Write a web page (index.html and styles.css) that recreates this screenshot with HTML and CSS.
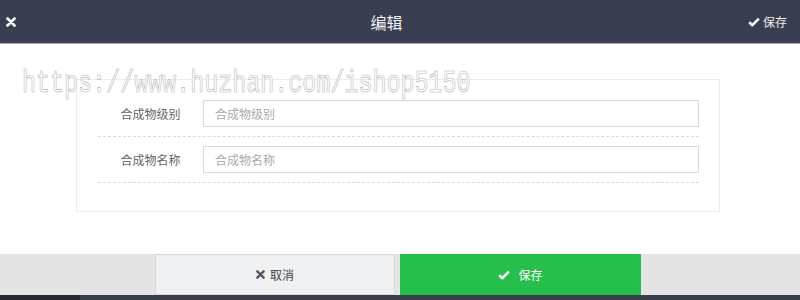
FILE: index.html
```html
<!DOCTYPE html>
<html lang="zh">
<head>
<meta charset="utf-8">
<link rel="stylesheet" href="styles.css">
</head>
<body>
<div class="page">
  <header class="topbar">
    <div class="tb-left">
      <svg class="ic-x" viewBox="0 0 10 10" width="10" height="10"><path d="M1.5 1.5 L8.5 8.5 M8.5 1.5 L1.5 8.5" stroke="#fff" stroke-width="2.6" stroke-linecap="round"/></svg>
    </div>
    <div class="tb-title">编辑</div>
    <div class="tb-right">
      <svg class="ic-check" viewBox="0 0 12 10" width="12" height="10"><path d="M1.2 5.2 L4.4 8.2 L10.8 1.6" fill="none" stroke="#fff" stroke-width="2.6" stroke-linejoin="round"/></svg>
      <span>保存</span>
    </div>
  </header>
  <main class="content">
    <div class="card">
      <div class="row">
        <label class="lbl">合成物级别</label>
        <div class="field"><input class="inp" type="text" placeholder="合成物级别"></div>
      </div>
      <div class="row">
        <label class="lbl">合成物名称</label>
        <div class="field"><input class="inp" type="text" placeholder="合成物名称"></div>
      </div>
    </div>
    <div class="watermark">https://www.huzhan.com/ishop5150</div>
  </main>
  <footer class="footer">
    <div class="btn btn-cancel">
      <svg viewBox="0 0 10 10" width="9" height="9"><path d="M1.5 1.5 L8.5 8.5 M8.5 1.5 L1.5 8.5" stroke="#555" stroke-width="2.6" stroke-linecap="round"/></svg>
      <span>取消</span>
    </div>
    <div class="btn btn-save">
      <svg viewBox="0 0 12 10" width="12" height="10"><path d="M1.2 5.2 L4.4 8.2 L10.8 1.6" fill="none" stroke="#fff" stroke-width="2.6" stroke-linejoin="round"/></svg>
      <span>保存</span>
    </div>
  </footer>
  <div class="under">
    <div class="under-left"></div>
  </div>
</div>
</body>
</html>
```
FILE: styles.css
```css
* { box-sizing: border-box; }
html, body { margin: 0; padding: 0; }
body {
  width: 800px;
  height: 300px;
  overflow: hidden;
  background: #fff;
  font-family: "Noto Sans CJK SC", "Noto Sans", sans-serif;
}
.page {
  display: flex;
  flex-direction: column;
  height: 300px;
}
.topbar {
  height: 44px;
  flex: none;
  background: #3a3e51;
  border-bottom: 1px solid #a9acb4;
  display: flex;
  align-items: center;
  color: #fff;
}
.tb-left {
  width: 25px;
  padding-left: 6px;
  display: flex;
  align-items: center;
}
.tb-title {
  flex: 1;
  text-align: center;
  font-size: 16px;
  color: #f2f2f4;
  line-height: 20px;
}
.tb-right {
  width: 52px;
  display: flex;
  align-items: center;
  gap: 3px;
  font-size: 12px;
  color: #eee;
}
.content {
  position: relative;
  flex: 1;
  padding-top: 35px;
}
.card {
  margin-left: 76px;
  width: 644px;
  border: 1px solid #ececec;
  padding: 20px 20px 28px 21px;
  display: flex;
  flex-direction: column;
  gap: 9px;
}
.row {
  display: flex;
  align-items: center;
  padding-bottom: 9px;
  border-bottom: 1px dashed #dcdcdc;
}
.lbl {
  width: 105px;
  text-align: center;
  font-size: 12px;
  color: #666;
}
.field { flex: 1; }
.inp {
  display: block;
  width: 100%;
  height: 27px;
  border: 1px solid #d9d9d9;
  padding: 0 11px;
  font-size: 12px;
  font-family: "Noto Sans CJK SC", sans-serif;
  outline: none;
  color: #555;
}
.inp::placeholder { color: #aaa; }
.watermark {
  position: absolute;
  left: 22px;
  top: 24px;
  font-family: "Liberation Mono", monospace;
  font-size: 32px;
  line-height: 32px;
  color: #fff;
  -webkit-text-stroke: 0.7px #b5b5b5;
  transform: scaleX(0.73);
  transform-origin: left top;
  pointer-events: none;
  white-space: nowrap;
}
.footer {
  height: 41px;
  flex: none;
  background: #e4e4e4;
  display: flex;
  padding-left: 155px;
  gap: 5px;
}
.btn {
  width: 241px;
  height: 41px;
  display: flex;
  align-items: center;
  justify-content: center;
  gap: 5px;
  font-size: 12px;
}
.btn-cancel {
  width: 240px;
  background: #eef0f1;
  border: 1px solid #d6d8da;
  color: #444;
}
.btn-save {
  background: #27bf4b;
  color: #fff;
  gap: 8px;
}
.under {
  height: 5px;
  flex: none;
  background: #3a3d4a;
  display: flex;
}
.under-left {
  width: 80px;
  background: #25272f;
}
```
